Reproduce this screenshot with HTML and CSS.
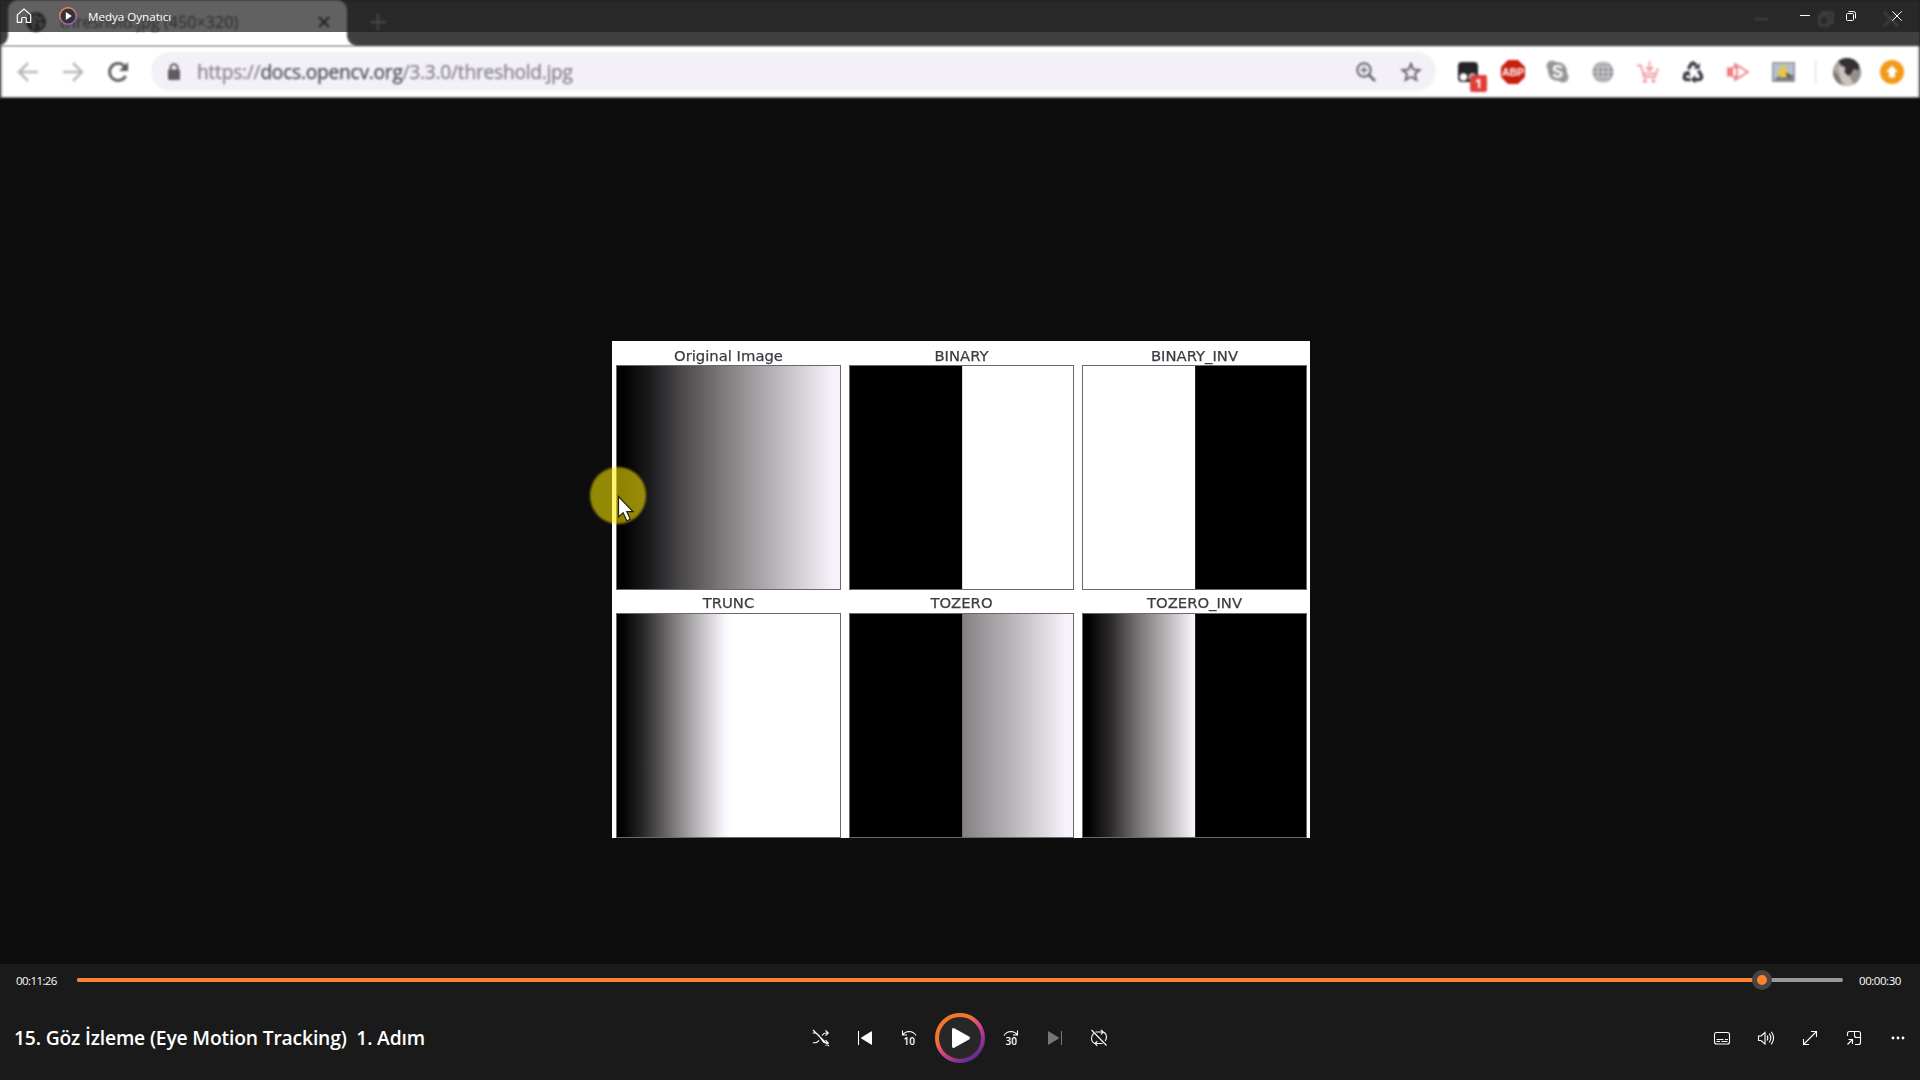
FILE: index.html
```html
<!DOCTYPE html>
<html lang="tr">
<head>
<meta charset="utf-8">
<title>Medya Oynatıcı</title>
<link rel="stylesheet" href="styles.css">
</head>
<body>
<main class="player">
  <section class="video">
    <div class="tabstrip">
      <div class="tab">
        <svg class="tab-globe" width="20" height="20" viewBox="0 0 20 20"><circle cx="10" cy="10" r="10" fill="#383840"/><path d="M2 6l5 1 2 3-2 2 1 5M10 2l-1 3 4 2 4-1M12 11l4 1-2 4" fill="none" stroke="#aaa" stroke-width="2.4"/></svg>
        <span class="tab-title">threshold.jpg (450×320)</span>
        <svg class="tab-close" width="12" height="12" viewBox="0 0 12 12"><path d="M1 1l10 10M11 1L1 11" stroke="#333" stroke-width="2.200"/></svg>
      </div>
      <svg class="tab-new" width="18" height="18" viewBox="0 0 18 18"><path d="M9 1v16M1 9h16" stroke="#a2a2a2" stroke-width="2.400"/></svg>
      <div class="old-buttons">
        <svg width="16" height="16" viewBox="0 0 16 16"><path d="M1 8h14" stroke="#999" stroke-width="2"/></svg>
        <svg width="16" height="16" viewBox="0 0 16 16"><path d="M1.500 4.500h9v10h-9zM4.500 4V1.500h10v10H11" fill="none" stroke="#a0a0a0" stroke-width="2"/></svg>
        <svg width="16" height="16" viewBox="0 0 16 16"><path d="M1 1l14 14M15 1L1 15" stroke="#a0a0a0" stroke-width="2"/></svg>
      </div>
    </div>
    <div class="toolbar">
      <div class="nav">
        <svg width="22" height="22" viewBox="0 0 22 22"><path d="M21 11H3M11 2l-9 9 9 9" fill="none" stroke="#bcb8bd" stroke-width="2.500"/></svg>
        <svg width="22" height="22" viewBox="0 0 22 22"><path d="M1 11h18M11 2l9 9-9 9" fill="none" stroke="#bcb8bd" stroke-width="2.500"/></svg>
        <svg width="22" height="22" viewBox="0 0 22 22"><path d="M18.600 15A8.500 8.500 0 1 1 17.500 5.300" fill="none" stroke="#5c595e" stroke-width="2.800"/><path d="M21 1v9h-9z" fill="#5c595e"/></svg>
      </div>
      <div class="omnibox">
        <svg width="14" height="18" viewBox="0 0 14 18"><path d="M3.500 8V4.800a3.500 3.500 0 0 1 7 0V8" fill="none" stroke="#5f5d62" stroke-width="2"/><rect x="1" y="6.500" width="12" height="10.500" rx="1.200" fill="#5f5d62"/></svg>
        <span class="url">https://<b>docs.opencv.org</b>/3.3.0/threshold.jpg</span>
        <svg class="push" width="22" height="22" viewBox="0 0 22 22"><g fill="none" stroke="#67646b" stroke-width="2"><circle cx="9" cy="9" r="6.700"/><path d="M14 14l6 6" stroke-width="2.600"/><path d="M9 5.500v7M5.500 9h7" stroke-width="1.500"/></g></svg>
        <svg width="22" height="22" viewBox="0 0 22 22"><path d="M11 2.800l2.400 5.700 6.200.5-4.700 4 1.500 6.100-5.400-3.300-5.400 3.300 1.500-6.100-4.700-4 6.200-.5z" fill="none" stroke="#67646b" stroke-width="1.900"/></svg>
      </div>
      <div class="extensions">
        <div class="ext">
          <svg width="20" height="20" viewBox="0 0 20 20"><rect x="0" y="0" width="20" height="20" rx="4" fill="#242326"/><circle cx="5.500" cy="15" r="3.800" fill="#fff"/><circle cx="14.500" cy="15" r="3.800" fill="#ddd"/></svg>
          <span class="badge">1</span>
        </div>
        <div class="ext"><svg width="24" height="24" viewBox="0 0 24 24"><path d="M7 0h10l7 7v10l-7 7H7l-7-7V7z" fill="#c81e0c"/><text x="12" y="16" text-anchor="middle" class="abp">ABP</text></svg></div>
        <div class="ext"><svg width="23" height="23" viewBox="0 0 23 23"><g fill="#989599"><circle cx="11.500" cy="11.500" r="9.500"/><circle cx="6" cy="6" r="5.500"/><circle cx="17" cy="17" r="5.500"/></g><path d="M15.500 8c-1-2.600-7.500-2.600-7.500.7 0 3.400 7.500 1.800 7.500 5.300 0 3.600-7 3.400-8 .4" fill="none" stroke="#fff" stroke-width="2.300"/></svg></div>
        <div class="ext"><svg width="22" height="22" viewBox="0 0 22 22"><circle cx="11" cy="11" r="10.500" fill="#98959a"/><path d="M11 0v22M1 6h20M0 11h22M1 16h20" stroke="#dddbe0" stroke-width="1.100"/><ellipse cx="11" cy="11" rx="5.500" ry="10.500" fill="none" stroke="#dddbe0" stroke-width="1.100"/></svg></div>
        <div class="ext"><svg width="22" height="22" viewBox="0 0 22 22"><path d="M0 4.500h4L7 16h11l3-9M7 12.500h11M12.500 0v9M9 6l3.500 3.500L16 6" fill="none" stroke="#ee9ca0" stroke-width="1.800"/><circle cx="8" cy="20" r="2" fill="#ee9ca0"/><circle cx="16.500" cy="20" r="2" fill="#ee9ca0"/></svg></div>
        <div class="ext"><svg width="22" height="22" viewBox="0 0 22 22"><g fill="none" stroke="#393844" stroke-width="3.400"><path d="M6.500 8L9 3.200Q11 .7 13 3.200L14 5"/><path d="M16.500 9.500L19.300 14.500Q20.500 18 17 18.600H12.500"/><path d="M8.500 18.600H4.500Q1.200 18 2.700 14.500L4 12"/></g><path d="M11.500 7.500l6 .5.500-6zM13.500 14v8.500L8.800 18.600zM1 12l6-2.500 1.500 6z" fill="#393844"/></svg></div>
        <div class="ext"><svg width="22" height="20" viewBox="0 0 22 20"><rect x="0" y="5.500" width="6" height="9" fill="#f07a7c"/><path d="M8 5.500V2l13 8L8 18v-3.500M5 5.500h5v9H5" fill="none" stroke="#ef8588" stroke-width="2"/></svg></div>
        <div class="ext"><svg width="23" height="20" viewBox="0 0 23 20"><rect x=".7" y=".7" width="21.600" height="18.600" fill="#b5bfcf" stroke="#88878e" stroke-width="1.200"/><path d="M1.500 18.500l6-5 6 2 8-3v6z" fill="#747883"/><path d="M7 8l3-5 3 1 2 5 2 3-3 3-5 .5-4-3z" fill="#e8c64f"/><path d="M14 10l6 4-5 2z" fill="#665b35"/></svg></div>
      </div>
      <span class="divider"></span>
      <svg class="avatar" width="28" height="28" viewBox="0 0 28 28"><defs><clipPath id="face"><circle cx="14" cy="14" r="14"/></clipPath></defs><g clip-path="url(#face)"><path fill="#aaa4a1" d="M0 0h28v28H0z"/><path d="M8 0h12l6 6v7l-5-2-3 5-4 3-4-4 3-5-5-3-3-4z" fill="#353132"/><path d="M5 9l6 0 1 6 5 4 5 7-9 2-5-7z" fill="#cbc4c0"/><path d="M18 16l5-4h5v12l-6 4-5-8z" fill="#96908d"/><path d="M0 12l5 5 4 10H0z" fill="#7b7673"/></g></svg>
      <svg class="update" width="24" height="24" viewBox="0 0 24 24"><circle cx="12" cy="12" r="12" fill="#f29a17"/><path d="M12 5.500l6 6.500h-3v5.500H9V12H6z" fill="#fff"/></svg>
    </div>
    <div class="page">
      <div class="figure">
        <figure><figcaption>Original Image</figcaption><div class="plot original"></div></figure>
        <figure><figcaption>BINARY</figcaption><div class="plot binary"></div></figure>
        <figure><figcaption>BINARY_INV</figcaption><div class="plot binary-inv"></div></figure>
        <figure><figcaption>TRUNC</figcaption><div class="plot trunc"></div></figure>
        <figure><figcaption>TOZERO</figcaption><div class="plot tozero"></div></figure>
        <figure><figcaption>TOZERO_INV</figcaption><div class="plot tozero-inv"></div></figure>
      </div>
    </div>
    <div class="spotlight"></div>
    <svg class="pointer" width="18" height="28" viewBox="0 0 18 28"><path d="M1.500 1.500v20.500l4.600-4.200 3.700 8 3.500-1.500-3.500-7.600h6.200z" fill="#fff" stroke="#25220c" stroke-width="1.200"/></svg>
  </section>

  <header class="titlebar">
    <svg width="16" height="16" viewBox="0 0 16 16"><path d="M1.300 6.900L8 1l6.700 5.900v7.500h-4.400V10.500q0-1-1-1H6.700q-1 0-1 1v3.900H1.300z" fill="none" stroke="#fff" stroke-width="1.200" stroke-linejoin="round"/></svg>
    <svg class="app-logo" width="18" height="18" viewBox="0 0 18 18"><defs><linearGradient id="ring" x1="0.200" y1="0.100" x2="0.800" y2="0.900"><stop offset="0.250" stop-color="#f4762a"/><stop offset="0.550" stop-color="#d6418b"/><stop offset="1" stop-color="#65308d"/></linearGradient><linearGradient id="logo-ring" x1="0" y1="0" x2="0.600" y2="1"><stop offset="0.200" stop-color="#f28a4c"/><stop offset="1" stop-color="#9d5dc6"/></linearGradient></defs><circle cx="9" cy="9" r="8.200" fill="#353138" stroke="url(#logo-ring)" stroke-width="1.500"/><path d="M6.800 5v8l6-4z" fill="#fff"/></svg>
    <span class="app-name">Medya Oynatıcı</span>
    <div class="window-buttons">
      <svg width="10" height="10" viewBox="0 0 10 10"><path d="M0 4.500h10" stroke="#fff"/></svg>
      <svg width="10" height="10" viewBox="0 0 10 10"><rect x=".5" y="2.500" width="7" height="7" rx="1" fill="none" stroke="#fff"/><path d="M2.500.5h5q2 0 2 2v5" fill="none" stroke="#fff"/></svg>
      <svg width="10" height="10" viewBox="0 0 10 10"><path d="M.3.300l9.400 9.400M9.700.3L.3 9.700" stroke="#fff"/></svg>
    </div>
  </header>

  <footer class="controls">
    <div class="seek">
      <span class="time">00:11:26</span>
      <div class="track"><div class="played"></div><div class="thumb"></div></div>
      <span class="time">00:00:30</span>
    </div>
    <div class="buttons">
      <h1 class="media-title">15. Göz İzleme (Eye Motion Tracking)&nbsp; 1. Adım</h1>
      <div class="transport">
        <svg class="ico" viewBox="0 0 18 18"><path d="M.8 4H3q2 0 4 2.500L10 11q1.500 3 4 3h2M.8 13.800H3q2 0 4-2.500M10 6.500Q11.500 4 14 4h2M13.500 1.300L16.300 4l-2.800 2.700M13.500 11.200l2.800 2.800-2.800 2.700M1 1l16 16"/></svg>
        <svg class="ico" viewBox="0 0 18 18"><path d="M2.500 2v14"/><path class="fill" d="M16 2.500v13q0 .5-.5.300L5.300 9.500q-.5-.5 0-1L15.500 2.200q.5-.2.500.3z"/></svg>
        <svg class="ico" viewBox="0 0 18 18"><path d="M2.500 1.500v4.500h4.500M2.700 5.700Q5 2.700 9 2.500q4.500 0 7 4"/><text x="9.200" y="16" class="skip">10</text></svg>
        <svg class="play" width="50" height="50" viewBox="0 0 50 50"><circle cx="25" cy="25" r="23" fill="#272727" stroke="url(#ring)" stroke-width="4"/><path d="M17 17v16q0 3 2.700 1.500L34 26.500q2-1.500 0-3L19.700 15.500Q17 14 17 17z" fill="#fff"/></svg>
        <svg class="ico" viewBox="0 0 18 18"><path d="M15.500 1.500v4.500h-4.500M15.300 5.700Q13 2.700 9 2.500q-4.500 0-7 4"/><text x="9.300" y="16" class="skip">30</text></svg>
        <svg class="ico disabled" viewBox="0 0 18 18"><path d="M15.500 2v14"/><path class="fill" d="M2 2.500v13q0 .5.500.300L12.700 9.500q.5-.5 0-1L2.500 2.200q-.5-.2-.5.3z"/></svg>
        <svg class="ico" viewBox="0 0 18 18"><path d="M5.500 3H12q4 0 4.500 5-.1 2-1.300 4M11 .8L13.300 3 11 5.300M12.500 14.500H6q-4 0-4.500-5 0-3.500 2.200-5M7.300 12.200L5 14.500l2.300 2.300M1.500 1l15 15.500"/></svg>
      </div>
      <div class="tools">
        <svg class="ico" viewBox="0 0 18 18"><rect x="1.500" y="3.500" width="15" height="11.500" rx="2"/><path d="M3.500 10.500h7M12 10.500h3M3.500 12.500h3.500M8.500 12.500h6"/></svg>
        <svg class="ico" viewBox="0 0 18 18"><path d="M1.500 7v4.500h2.600l3.900 3.600V3.500L4.100 7zM10 6.700q1.800 2.300 0 4.800M12.200 4.700q3.300 4.300 0 8.800M14.300 2.800q4.600 6.300 0 12.500"/></svg>
        <svg class="ico" viewBox="0 0 18 18"><path d="M2.500 15.500l13-13M10 2.500h5.500V8M2.500 10v5.500H8"/></svg>
        <svg class="ico" viewBox="0 0 18 18"><path d="M2.500 7V4.500q0-2 2-2h9q2 0 2 2v9q0 2-2 2H10M9.500 2.500v4q0 2 2 2h4M2.500 15.500L7.500 10.500M3.500 10.500h4v4.500"/></svg>
        <svg class="ico" viewBox="0 0 18 18"><g class="fill"><circle cx="4" cy="9" r="1.400"/><circle cx="9" cy="9" r="1.400"/><circle cx="14" cy="9" r="1.400"/></g></svg>
      </div>
    </div>
  </footer>
</main>
</body>
</html>
```

FILE: styles.css
```css
* { box-sizing: border-box; }
body { margin: 0; background: #0d0d0d; overflow: hidden; font-family: "Open Sans", "Noto Sans", sans-serif; }
svg { display: block; flex: none; }

.player { position: relative; display: flex; flex-direction: column; width: 1920px; height: 1080px; }

/* Video frame: a recorded browser window */
.video { position: relative; display: flex; flex-direction: column; height: 964px; background: #0d0d0d; }
.tabstrip { display: flex; align-items: center; height: 46px; background: #404040; padding-left: 8px; filter: blur(0.8px); }
.tab { position: relative; display: flex; align-items: center; width: 339px; height: 46px; padding: 0 17px 2px 18px; background: #fff; border-radius: 10px 10px 0 0; }
.tab::before, .tab::after { content: ""; position: absolute; bottom: 0; width: 10px; height: 10px; }
.tab::before { left: -10px; background: radial-gradient(circle at 0 0, transparent 9.5px, #fff 10px); }
.tab::after { right: -10px; background: radial-gradient(circle at 100% 0, transparent 9.5px, #fff 10px); }
.tab-title { margin-left: 14px; font-size: 16.2px; color: #47474b; white-space: nowrap; }
.tab-close { margin-left: auto; }
.tab-new { margin: 0 0 2px 22px; }
.old-buttons { display: flex; gap: 49px; margin: 0 21px 9px auto; }

.toolbar { display: flex; align-items: center; height: 52px; background: #fff; border-bottom: 1px solid #777; border-left: 2px solid #999; border-right: 2px solid #aaa; filter: blur(0.8px); }
.nav { display: flex; gap: 23px; margin-left: 15px; }
.omnibox { display: flex; align-items: center; width: 1285px; height: 39px; margin-left: 22px; padding: 0 14px 0 16px; border-radius: 20px; background: #f3f0f8; }
.url { margin-left: 16px; font-size: 19.2px; letter-spacing: -0.26px; color: #85828a; -webkit-text-stroke: 0.25px currentColor; white-space: nowrap; }
.url b { font-weight: 400; color: #4e4c53; }
.push { margin: 0 23px 0 auto; }
.extensions { display: flex; margin-left: 9px; }
.ext { position: relative; display: flex; align-items: center; justify-content: center; width: 45.1px; height: 28px; }
.badge { position: absolute; left: 25px; top: 17px; width: 17px; height: 17px; border-radius: 2px; background: #e0403a; color: #fff; font: 700 13px/17px "Open Sans", sans-serif; text-align: center; }
.abp { font: 700 10.5px "Liberation Sans", sans-serif; fill: #fff; }
.divider { width: 1px; height: 22px; margin-left: 9px; background: #d5d2d8; }
.avatar { margin-left: 17px; }
.update { margin-left: 19px; }

.page { display: flex; padding: 243px 0 0 611.5px; filter: blur(0.7px); }
.figure { display: grid; grid-template-columns: repeat(3, 225px); column-gap: 8px; width: 698px; height: 497px; padding: 0 3px 0 4.5px; background: #fff; }
.figure figure { margin: 0; }
.figure figcaption { height: 24px; padding-top: 6px; font: 14.8px/17px "DejaVu Sans", sans-serif; color: #3f3b42; -webkit-text-stroke: 0.25px currentColor; text-align: center; }
.figure figure:nth-child(n+4) figcaption { height: 23px; padding-top: 4px; }
.plot { height: 225px; border: 1.500px solid #6c676f; }
.original { background: linear-gradient(90deg, #000 2%, #1c1b1d 15%, #474547 28%, #858182 50%, #bbb6bc 72%, #f8f3fa 97%); }
.binary { background: linear-gradient(90deg, #000 50.1%, #fff 50.500%); }
.binary-inv { background: linear-gradient(90deg, #fff 50.1%, #000 50.500%); }
.trunc { background: linear-gradient(90deg, #000 2%, #2a292b 12%, #6f6a6b 23%, #b9b6ba 36%, #faf5fc 48%, #fff 51%); }
.tozero { background: linear-gradient(90deg, #000 50.1%, #858183 50.500%, #bfbabf 75%, #f8f3fa 97%); }
.tozero-inv { background: linear-gradient(90deg, #000 2%, #29272a 12%, #747070 24%, #bbb6ba 38%, #fbf6fc 50.1%, #000 50.500%); }

.spotlight { position: absolute; left: 590px; top: 467px; width: 56px; height: 57px; border-radius: 50%; background: rgba(255, 236, 0, 0.56); filter: blur(0.8px); }
.pointer { position: absolute; left: 617px; top: 495px; filter: blur(0.5px); }

/* Player chrome */
.titlebar { position: absolute; inset: 0 0 auto; display: flex; align-items: center; height: 32px; padding: 0 18px 0 16px; background: rgba(30, 30, 30, 0.7); color: #fff; }
.app-logo { margin-left: 27px; }
.app-name { margin: 1px 0 0 11px; font-size: 11.6px; }
.window-buttons { display: flex; gap: 36px; margin-left: auto; }

.controls { height: 116px; background: #1a1a1a; color: #fff; }
.seek { display: flex; align-items: center; height: 32px; padding: 0 16px; }
.time { width: 61px; font-size: 11.5px; letter-spacing: -0.58px; padding-top: 1px; }
.time:last-child { width: 45px; margin-left: 16px; letter-spacing: -0.45px; }
.track { position: relative; flex: 1; height: 4px; border-radius: 2px; background: #999; }
.played { width: 1685px; height: 4px; border-radius: 2px; background: #ff822e; }
.thumb { position: absolute; left: 1675px; top: -8px; width: 20px; height: 20px; border: 5px solid #454545; border-radius: 50%; background: #ff822e; }
.buttons { display: grid; grid-template-columns: 1fr auto 1fr; align-items: center; height: 84px; padding: 0 9px 0 14px; }
.media-title { margin: 0 0 2px; font-size: 19.3px; font-weight: 600; letter-spacing: -0.17px; white-space: nowrap; }
.transport { display: flex; align-items: center; gap: 26px; margin: 0 2.5px 0 -2.5px; }
.play { margin: 0 -9px; }
.tools { display: flex; justify-content: flex-end; gap: 26px; padding-right: 4px; }
.ico { width: 18px; height: 18px; fill: none; stroke: #fff; stroke-width: 1.1; overflow: visible; }
.ico .fill { fill: #fff; stroke: none; }
.ico .skip { fill: #fff; stroke: none; font: 600 10px "Open Sans", sans-serif; text-anchor: middle; }
.disabled { opacity: 0.4; }
```
